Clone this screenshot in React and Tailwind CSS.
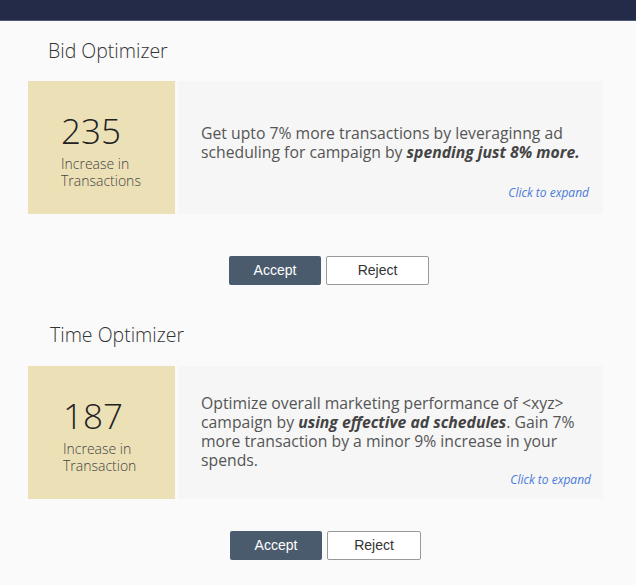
import React from 'react';

const cards = [
  {
    title: 'Bid Optimizer',
    titleClass: 'pl-[48px] pt-[17px] h-[60px]',
    value: '235',
    label: ['Increase in', 'Transactions'],
    numPad: 'pl-[33px]',
    textPad: 'pt-[43px]',
    body: (
      <>
        Get upto 7% more transactions by leveraginng ad
        <br />
        scheduling for campaign by{' '}
        <b className="font-bold italic text-[#444]">spending just 8% more.</b>
      </>
    ),
    clickPad: 'pt-[23px] pr-[14px]',
    buttonsClass: 'pt-[42px] pl-[229px]',
    rejectWidth: 'w-[103px]',
  },
  {
    title: 'Time Optimizer',
    titleClass: 'pl-[50px] pt-[37px] h-[81px]',
    value: '187',
    label: ['Increase in', 'Transaction'],
    numPad: 'pl-[35px]',
    textPad: 'pt-[28px]',
    body: (
      <>
        Optimize overall marketing performance of &lt;xyz&gt;
        <br />
        campaign by{' '}
        <b className="font-bold italic text-[#444]">using effective ad schedules</b>. Gain 7%
        <br />
        more transaction by a minor 9% increase in your
        <br />
        spends.
      </>
    ),
    clickPad: 'pt-[2px] pr-[12px]',
    buttonsClass: 'pt-[32px] pl-[230px]',
    rejectWidth: 'w-[94px]',
  },
];

function Optimizer({ c }) {
  return (
    <section>
      <h2 className={`${c.titleClass} text-[19.5px] leading-[26px] font-light text-[#333]`}>{c.title}</h2>
      <div className="flex ml-[28px] w-[575px] h-[133px] gap-[3px]">
        <div className={`w-[147px] bg-[#ece0b7] pt-[29px] ${c.numPad}`}>
          <div className="text-[35px] leading-[42px] font-light text-[#222]">{c.value}</div>
          <div className="text-[14px] leading-[17px] font-light text-[#444] mt-[3px]">
            {c.label[0]}
            <br />
            {c.label[1]}
          </div>
        </div>
        <div className={`flex-1 bg-[#f6f6f6] pl-[23px] ${c.textPad} flex flex-col`}>
          <p className="text-[15.75px] leading-[19px] text-[#555]">{c.body}</p>
          <div className={`${c.clickPad} text-right text-[12px] leading-[16px] italic text-[#4a7bd6]`}>Click to expand</div>
        </div>
      </div>
      <div className={`${c.buttonsClass} flex gap-[5px]`} style={{ fontFamily: '"Liberation Sans", Arial, sans-serif' }}>
        <button className="w-[92px] h-[29px] rounded-[2px] bg-[#4b5b6e] text-white text-[14px]">Accept</button>
        <button className={`${c.rejectWidth} h-[29px] rounded-[2px] bg-white border border-[#999] text-[#333] text-[14px]`}>Reject</button>
      </div>
    </section>
  );
}

export default function App() {
  return (
    <div className="w-[636px] h-[585px] bg-[#fafafa] overflow-hidden" style={{ fontFamily: '"Open Sans", "Noto Sans", sans-serif' }}>
      <div className="h-[21px] bg-[#232b48] border-b border-[#4e5876]" />
      <Optimizer c={cards[0]} />
      <Optimizer c={cards[1]} />
    </div>
  );
}
